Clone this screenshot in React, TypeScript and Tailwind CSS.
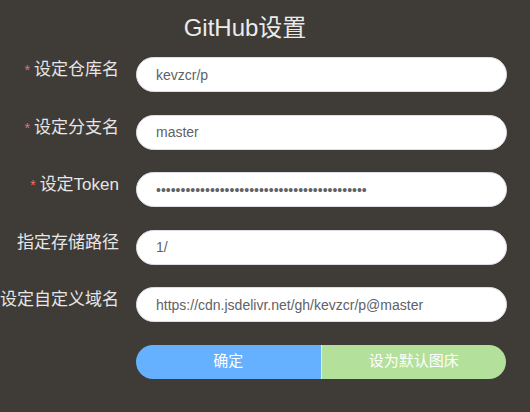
import React from "react";

const font = { fontFamily: '"Liberation Sans", Arial, "Noto Sans CJK SC", sans-serif' };

function Row({ label, required, value, type = "text" }: { label: string; required?: boolean; value: string; type?: string }) {
  return (
    <div className="flex items-start">
      <label className="w-[119px] shrink-0 text-right text-[17px] leading-[26px] text-[#e6e6e6] whitespace-nowrap">
        {required && <span className="text-[#f56c6c] text-[14px] mr-[4px] align-top">*</span>}
        {label}
      </label>
      <input
        readOnly
        type={type}
        value={value}
        className="ml-[17px] w-[371px] h-[35px] rounded-full bg-white border border-[#dcdfe6] pl-[19px] pr-4 text-[14px] text-[#606266] outline-none"
        style={font}
      />
    </div>
  );
}

export default function App() {
  return (
    <div className="w-[530px] h-[412px] bg-[#3f3b37] overflow-hidden" style={font}>
      <div className="flex flex-col">
        <h1 className="mt-[12px] h-[32px] leading-[32px] text-center text-[24px] text-[#ebebeb]">
          <span className="relative left-[-20px]">GitHub设置</span>
        </h1>
        <div className="mt-[13px] flex flex-col gap-[22.5px]">
          <Row label="设定仓库名" required value="kevzcr/p" />
          <Row label="设定分支名" required value="master" />
          <Row label="设定Token" required type="password" value="ghp_abcdefghijklmnopqrstuvwxyz0123456789abc" />
          <Row label="指定存储路径" value="1/" />
          <Row label="设定自定义域名" value="https://cdn.jsdelivr.net/gh/kevzcr/p@master" />
          <div className="flex ml-[136px] w-[370px] h-[34px]">
            <button className="flex-1 rounded-l-full bg-[#66b1ff] text-white text-[15px]">确定</button>
            <button className="flex-1 rounded-r-full bg-[#b3e09b] text-white text-[15px] border-l border-white/60">设为默认图床</button>
          </div>
        </div>
      </div>
    </div>
  );
}
